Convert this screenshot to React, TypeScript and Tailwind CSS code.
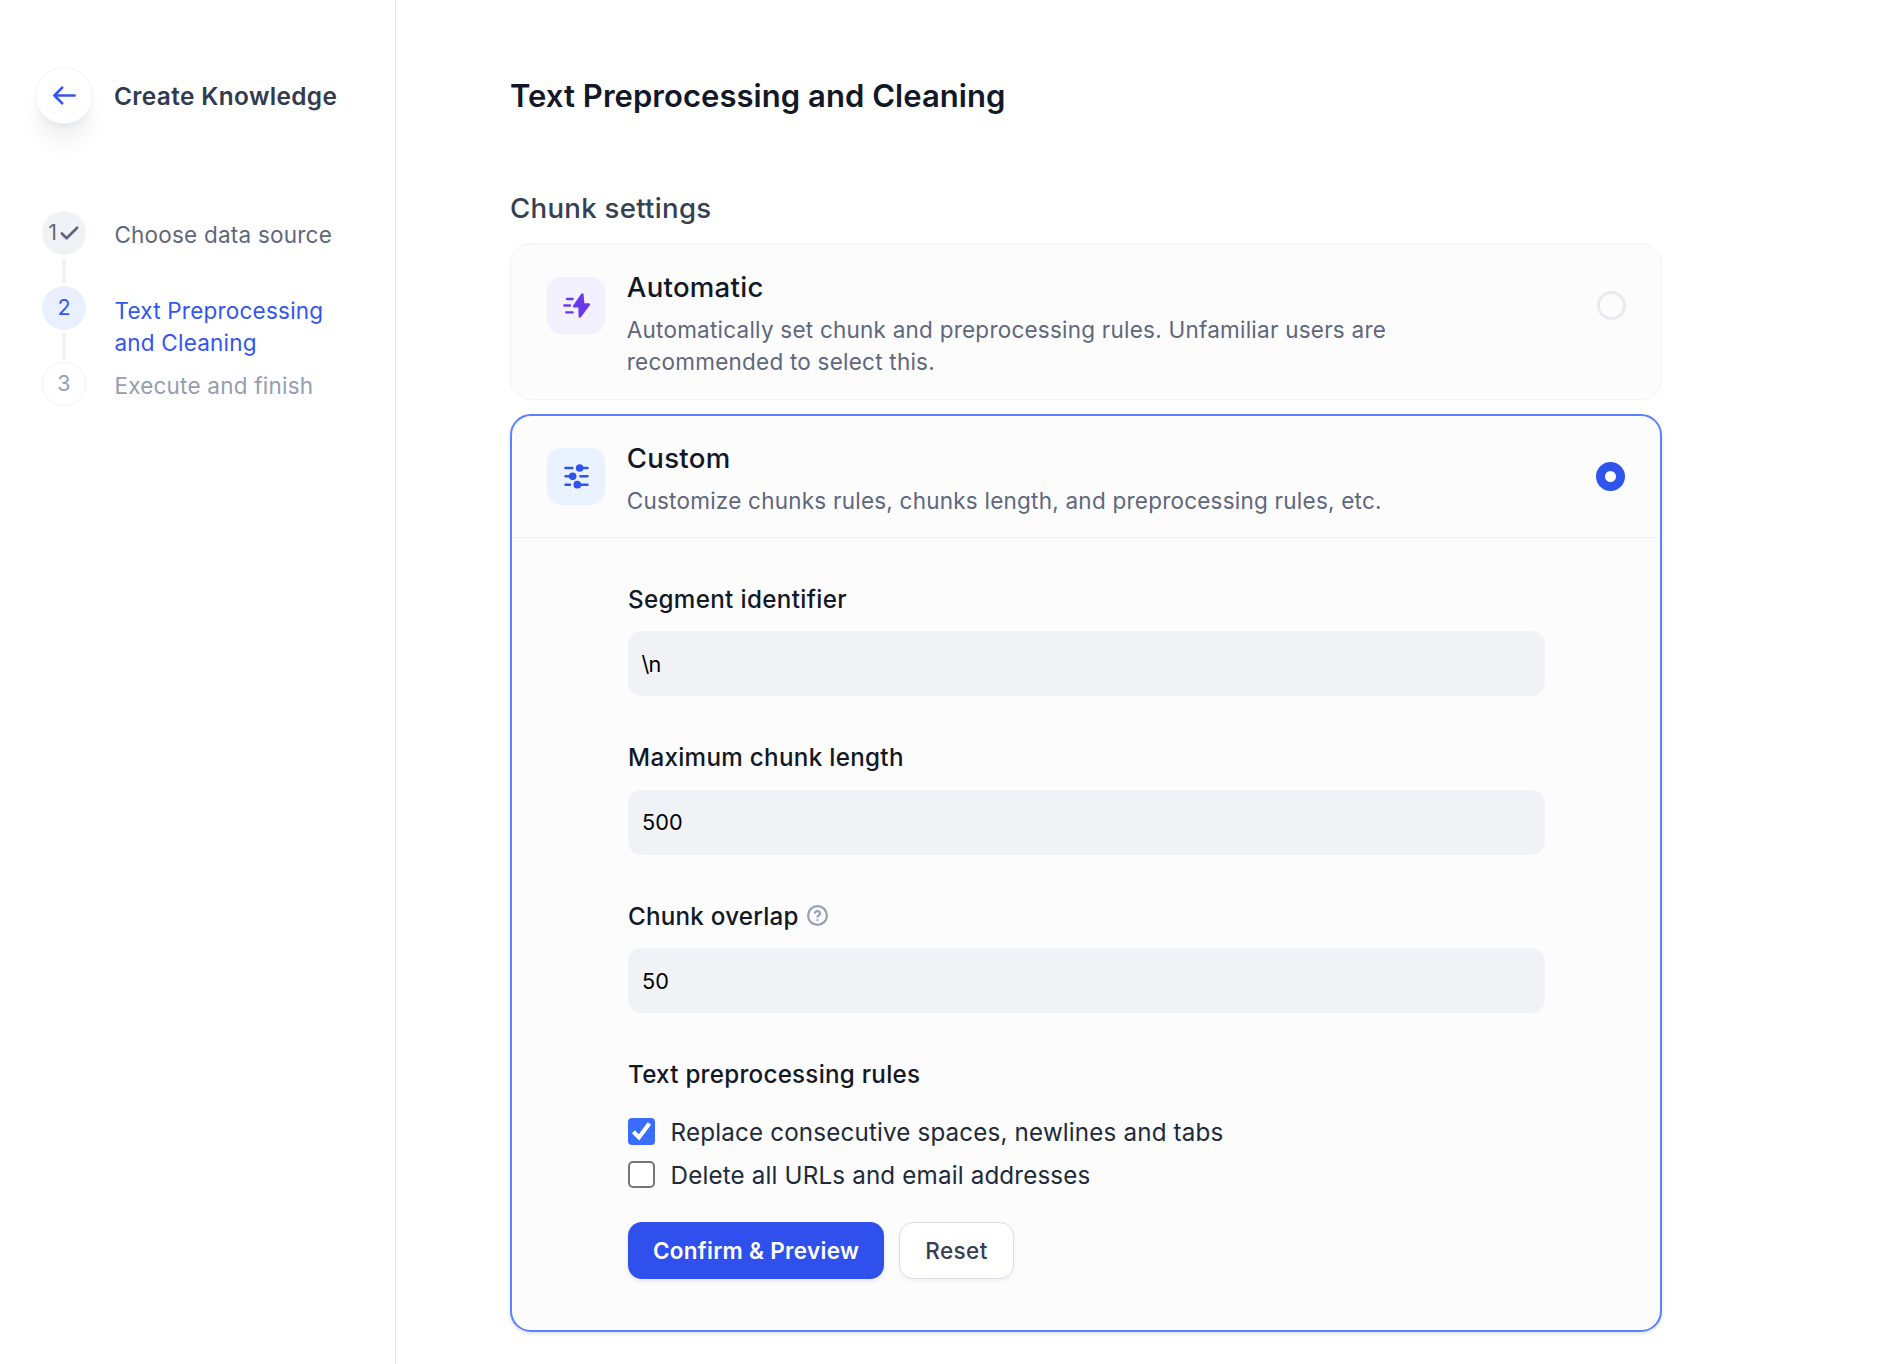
import type { ReactNode } from 'react'
import { Check } from 'lucide-react'

function BackArrow() {
  return (
    <svg viewBox="0 0 24 24" className="size-[27px]" fill="none" stroke="#3355f0" strokeWidth="2.3" strokeLinecap="round" strokeLinejoin="round">
      <path d="M10 19l-7-7m0 0l7-7m-7 7h18" />
    </svg>
  )
}

function ThunderIcon() {
  return (
    <svg viewBox="0 0 81 75" className="h-[25px] w-[27px]" fill="#6a38ea" stroke="#6a38ea" strokeLinecap="round" strokeLinejoin="round">
      <path d="M12 18H29M4 37.5H21M9.5 58H29" strokeWidth="7" />
      <path d="M58 4.5L33.5 40H50L50.5 70.5L77.5 34.5H60.5Z" strokeWidth="7.5" />
    </svg>
  )
}

function SlidersIcon() {
  return (
    <svg viewBox="0 0 75 75" className="size-[25px]" fill="#2f54eb" stroke="#2f54eb" strokeLinecap="round">
      <path d="M4.5 12H25M47 12H70.5M4.5 37H26M49 37H70.5M4.5 62H18M40 62H70.5" strokeWidth="7.5" />
      <g stroke="none">
        <circle cx="47" cy="12" r="11.5" />
        <circle cx="26" cy="37" r="11.5" />
        <circle cx="40" cy="62" r="11.5" />
      </g>
    </svg>
  )
}

function HelpIcon() {
  return (
    <svg viewBox="0 0 24 24" className="-mt-px ml-[7px] size-[23px]" fill="none" stroke="#98a0b6" strokeWidth="2.3" strokeLinecap="round" strokeLinejoin="round">
      <circle cx="12" cy="12" r="9.8" />
      <path d="M9.3 9.2a2.8 2.8 0 0 1 5.4 0.8c0 1.9-2.7 2.3-2.7 3.2M12 16.8h.01" />
    </svg>
  )
}

function Step({ marker, markerClass, line, className, textClass, children }: { marker: ReactNode; markerClass: string; line?: string; className: string; textClass: string; children: ReactNode }) {
  return (
    <li className={`flex ${className}`}>
      <div className="flex w-[44px] shrink-0 flex-col items-center">
        <div className={`flex size-[44px] shrink-0 items-center justify-center rounded-full text-[21.5px] leading-none ${markerClass}`}>{marker}</div>
        {line && <div className={`w-1 bg-[#f1f1f6] ${line}`} />}
      </div>
      <div className={`ml-[28.4px] w-[225px] text-[22.5px] leading-8 tracking-[0.22px] ${textClass}`}>{children}</div>
    </li>
  )
}

function CardHeader({ icon, iconClass, title, description, selected }: { icon: ReactNode; iconClass: string; title: string; description: string; selected: boolean }) {
  return (
    <div className="flex">
      <div className={`mt-[6px] flex h-[57px] w-[58px] shrink-0 items-center justify-center rounded-[14px] ${iconClass}`}>{icon}</div>
      <div className="ml-[21.8px] w-[800px]">
        <h3 className="text-[27.6px] leading-8 font-medium tracking-[0.27px] text-[#121826]">{title}</h3>
        <p className="mt-[11px] text-[22.5px] leading-8 tracking-[0.23px] text-[#5f677c]">{description}</p>
      </div>
      <div
        className={
          selected
            ? 'mt-[20px] ml-auto size-[29px] rounded-full border-[9px] border-[#2f54eb] bg-white'
            : 'mt-[20px] -mr-[0.5px] ml-auto size-[29px] rounded-full border-[3px] border-[#e9eaf0]'
        }
      />
    </div>
  )
}

function Field({ label, value, help, labelClass, valueClass }: { label: string; value: string; help?: boolean; labelClass: string; valueClass: string }) {
  return (
    <div>
      <div className="mb-4 flex h-8 items-center">
        <label className={`text-[24.2px] leading-8 font-medium text-[#121826] ${labelClass}`}>{label}</label>
        {help && <HelpIcon />}
      </div>
      <div className={`flex h-[65px] items-center rounded-[14px] bg-[#f1f2f6] text-[21.7px] text-black ${valueClass}`}>{value}</div>
    </div>
  )
}

function Rule({ label, checked }: { label: string; checked: boolean }) {
  return (
    <div className="flex h-[27px] items-center">
      {checked ? (
        <div className="flex size-[27px] items-center justify-center rounded-[4px] bg-[#3a6cff]">
          <svg viewBox="0 0 27 27" className="size-[27px]" fill="none" stroke="#fff" strokeWidth="4.2">
            <path d="M5.4 13.8L11 19.4L21.4 5.4" />
          </svg>
        </div>
      ) : (
        <div className="size-[27px] rounded-[5px] border-2 border-[#767676] bg-white" />
      )}
      <span className="ml-[15.6px] pt-[2px] text-[24.2px] leading-[27px] tracking-[0.16px] text-[#212a3a]">{label}</span>
    </div>
  )
}

export default function App() {
  return (
    <div className="flex h-[1364px] overflow-hidden bg-white font-['Inter',sans-serif]">
      <aside className="w-[396px] shrink-0 border-r border-[#e6e7ea] pt-[67px]">
        <div className="flex items-center pl-[35px]">
          <button className="flex h-[57px] w-[58px] items-center justify-center rounded-full border border-[#f1f3f6] bg-white shadow-[0_21px_28px_-7px_rgba(16,24,40,0.09),0_7px_10px_-4px_rgba(16,24,40,0.05)]">
            <BackArrow />
          </button>
          <h1 className="ml-[21px] text-[24.4px] leading-8 font-semibold tracking-[0.36px] text-[#323b4e]">Create Knowledge</h1>
        </div>
        <ol className="mt-[87px] pl-[42px]">
          <Step
            className="h-[75px] text-[#5f677c]"
            textClass="pt-2"
            markerClass="bg-[#f1f2f6]"
            line="mt-1 h-6"
            marker={
              <>
                1<Check className="-mr-[1px] ml-[1px] size-[23px]" strokeWidth={2.8} />
              </>
            }
          >
            Choose data source
          </Step>
          <Step className="h-[76px] text-[#3355f0]" textClass="pt-[9px]" markerClass="bg-[#eaf0ff]" line="mt-[3px] h-[27px]" marker="2">
            Text Preprocessing and Cleaning
          </Step>
          <Step className="text-[#959db0]" textClass="pt-2" markerClass="border border-[#f1f2f6]" marker="3">
            Execute and finish
          </Step>
        </ol>
      </aside>
      <main className="ml-[114px] w-[1152px] pt-[67px]">
        <h2 className="text-[31px] leading-[57px] font-semibold tracking-[0.05px] text-[#121826]">Text Preprocessing and Cleaning</h2>
        <div className="mt-16 text-[27.6px] leading-10 font-medium tracking-[0.29px] text-[#354052]">Chunk settings</div>
        <section className="mt-[15px] h-[157px] rounded-[21px] border border-[#f1f2f4] bg-[#fcfcfd] px-[36px] pt-[27px]">
          <CardHeader
            icon={<ThunderIcon />}
            iconClass="bg-[#f4f1ff]"
            title="Automatic"
            description="Automatically set chunk and preprocessing rules. Unfamiliar users are recommended to select this."
            selected={false}
          />
        </section>
        <section className="mt-[14px] h-[918px] rounded-[21px] border-2 border-[#5a82ff] bg-[#fcfcfd] shadow-[0_2px_4px_rgba(16,24,40,0.12)]">
          <div className="h-[122px] border-b border-[#f1f2f4] px-[35px] pt-[26px]">
            <CardHeader
              icon={<SlidersIcon />}
              iconClass="bg-[#ebf2ff]"
              title="Custom"
              description="Customize chunks rules, chunks length, and preprocessing rules, etc."
              selected
            />
          </div>
          <div className="flex flex-col gap-[45.5px] pt-[45px] pr-[115px] pl-[116px]">
            <Field label="Segment identifier" value="\n" labelClass="pt-[2px] tracking-[0.34px]" valueClass="pt-[2px] px-[13.5px] tracking-[-0.7px]" />
            <Field label="Maximum chunk length" value="500" labelClass="tracking-[0.31px]" valueClass="px-[14px] tracking-[0.1px]" />
            <Field label="Chunk overlap" value="50" help labelClass="pt-[2px] tracking-[0.24px]" valueClass="pt-[2px] px-[14px] tracking-[0.1px]" />
            <div>
              <div className="text-[24.2px] leading-8 font-medium tracking-[0.25px] text-[#121826]">Text preprocessing rules</div>
              <div className="mt-[27px] flex flex-col gap-4">
                <Rule label="Replace consecutive spaces, newlines and tabs" checked />
                <Rule label="Delete all URLs and email addresses" checked={false} />
              </div>
              <div className="mt-[34px] flex gap-[15px] text-[22.5px]">
                <button className="h-[57px] w-[256px] rounded-[14px] bg-[#2f50ec] pt-px font-semibold tracking-[0.29px] text-white shadow-[0_2px_4px_rgba(16,24,40,0.1)]">
                  Confirm &amp; Preview
                </button>
                <button className="h-[57px] w-[115px] rounded-[14px] border border-[#dcdee3] bg-white pt-px font-medium tracking-[0.42px] text-[#354052] shadow-[0_2px_4px_rgba(16,24,40,0.05)]">
                  Reset
                </button>
              </div>
            </div>
          </div>
        </section>
      </main>
    </div>
  )
}
